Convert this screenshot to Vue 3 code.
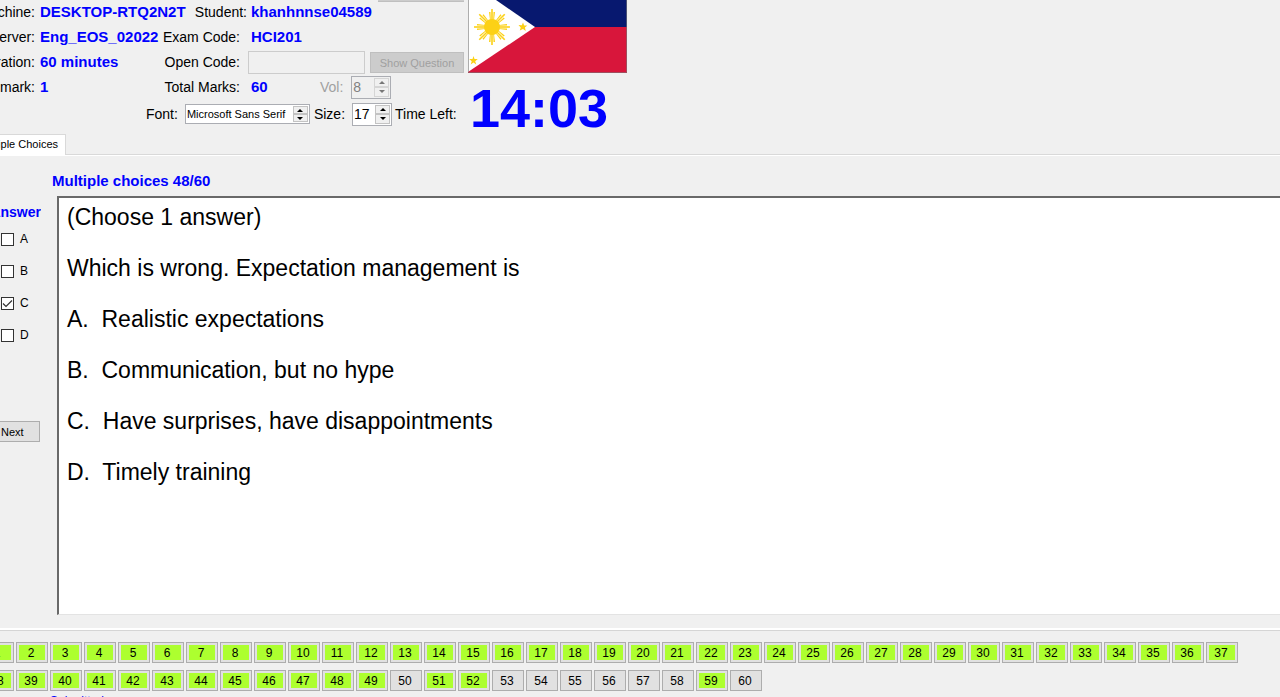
<script setup>
import { ref } from 'vue'

const answers = ref([
  { id: 'A', checked: false },
  { id: 'B', checked: false },
  { id: 'C', checked: true },
  { id: 'D', checked: false }
])
const lines = [
  '(Choose 1 answer)',
  'Which is wrong. Expectation management is',
  'A.  Realistic expectations',
  'B.  Communication, but no hype',
  'C.  Have surprises, have disappointments',
  'D.  Timely training'
]
const open = new Set([50, 53, 54, 55, 56, 57, 58, 60])
const rows = [
  Array.from({ length: 37 }, (_, i) => i + 1),
  Array.from({ length: 23 }, (_, i) => i + 38)
]
const rays = [0, 45, 90, 135, 180, 225, 270, 315]
</script>

<template>
  <main class="exam">
    <header class="top">
      <div class="info">
        <div class="row">
          <span class="lab edge">Machine:</span><b class="val">DESKTOP-RTQ2N2T</b>
          <span class="lab student">Student:</span><b class="val name">khanhnnse04589</b>
          <span class="sliver"></span>
        </div>
        <div class="row">
          <span class="lab edge">Server:</span><b class="val clip">Eng_EOS_02022</b>
          <span class="lab mid">Exam Code:</span><b class="val second">HCI201</b>
        </div>
        <div class="row">
          <span class="lab edge">Duration:</span><b class="val clip">60 minutes</b>
          <label class="lab mid" for="code">Open Code:</label>
          <input id="code" class="code" type="text" disabled>
          <button class="show" type="button" disabled>Show Question</button>
        </div>
        <div class="row">
          <span class="lab edge">Q mark:</span><b class="val clip">1</b>
          <span class="lab mid">Total Marks:</span><b class="val second marks">60</b>
          <label class="lab off vol" for="vol">Vol:</label>
          <span class="spin small off">
            <input id="vol" type="text" value="8" disabled>
            <span class="arrows"><button type="button" disabled aria-label="Volume up"><i class="up"></i></button><button type="button" disabled aria-label="Volume down"><i class="down"></i></button></span>
          </span>
        </div>
        <div class="row fonts">
          <label class="lab" for="font">Font:</label>
          <span class="spin wide">
            <input id="font" type="text" value="Microsoft Sans Serif">
            <span class="arrows"><button type="button" aria-label="Next font"><i class="up"></i></button><button type="button" aria-label="Previous font"><i class="down"></i></button></span>
          </span>
          <label class="lab" for="size">Size:</label>
          <span class="spin small">
            <input id="size" type="text" value="17">
            <span class="arrows"><button type="button" aria-label="Larger"><i class="up"></i></button><button type="button" aria-label="Smaller"><i class="down"></i></button></span>
          </span>
          <span class="lab">Time Left:</span>
        </div>
      </div>
      <div class="side">
        <svg class="flag" viewBox="0 0 159 73" width="159" height="73" aria-label="Flag of the Philippines">
          <rect width="159" height="27" fill="#07186f" />
          <rect y="27" width="159" height="46" fill="#d8163b" />
          <path d="M0 0H28L67 27L0 72Z" fill="#fff" />
          <g fill="#fcd116">
            <circle cx="24" cy="27" r="8" />
            <g v-for="r in rays" :key="r" :transform="`translate(24 27) rotate(${r})`">
              <path d="M-.8 -7V-18H.8V-7Z" />
              <path d="M-2 -7L-3 -15H-1.500L-1.200 -7ZM2 -7L3 -15H1.500L1.200 -7Z" />
            </g>
            <path d="M55 22.500L56.200 25.500L59.300 25.500L56.900 27.600L57.800 31L55 29L51.800 30.500L52.700 27.500L50.500 25L53.800 25.200Z" />
            <path d="M5.500 56L6.500 59L9.800 59L7.200 61.200L8.200 64.500L5.500 62.500L2.700 64.500L3.700 61.200L1.200 59L4.500 59Z" />
          </g>
          <path d="M.5 0V72.500H158.500V0" fill="none" stroke="#777" stroke-opacity=".6" />
        </svg>
        <strong class="time">14:03</strong>
      </div>
    </header>

    <nav class="tabs"><button class="tab" type="button"><span>Multiple Choices</span></button></nav>

    <section class="body">
      <h1 class="title">Multiple choices 48/60</h1>
      <div class="panel">
        <aside class="answers">
          <b class="head"><span>Answer</span></b>
          <label v-for="a in answers" :key="a.id" class="choice">
            <input v-model="a.checked" type="checkbox">
            <svg class="box" viewBox="0 0 13 13" width="13" height="13">
              <rect x=".5" y=".5" width="12" height="12" fill="#fff" stroke="#333" />
              <path v-if="a.checked" d="M2 6.500L5 9.500L11 3.500" fill="none" stroke="#333" stroke-width="1.200" />
            </svg>
            {{ a.id }}
          </label>
          <button class="next" type="button">Next</button>
        </aside>
        <article class="question">
          <p v-for="l in lines" :key="l">{{ l }}</p>
        </article>
      </div>
    </section>

    <footer class="numbers">
      <div v-for="(row, i) in rows" :key="i" class="numrow">
        <button v-for="n in row" :key="n" type="button" class="num" :class="{ done: !open.has(n) }"><span>{{ n }}</span></button>
      </div>
      <p class="status">Submitted</p>
    </footer>
  </main>
</template>

<style>
html, body { margin: 0; background: #f0f0f0; overflow: hidden; }
</style>

<style scoped>
* { box-sizing: border-box; }
.exam { font: 14px/20px "Liberation Sans", Arial, sans-serif; color: #000; background: #f0f0f0; height: 100vh; overflow: hidden; }
button, input { font: inherit; margin: 0; padding: 0; border-radius: 0; }
.top { display: flex; height: 134px; }
.info { width: 468px; flex: none; }
.row { display: flex; align-items: center; height: 25px; padding-bottom: 1px; white-space: pre; }
.lab { flex: none; }
.edge { width: 35px; display: flex; justify-content: flex-end; overflow: hidden; margin-right: 5px; }
.val { color: #00f; font-size: 15px; flex: none; }
.clip { width: 122px; overflow: hidden; }
.mid { width: 78px; display: flex; justify-content: flex-end; margin-right: 8px; }
.second { margin-left: 3px; }
.student { margin: 0 4px 0 auto; }
.name { width: 127px; }
.sliver { align-self: flex-start; width: 86px; height: 2px; margin-right: 4px; background: #ccc; border-bottom: 1px solid #bfbfbf; }
.code { width: 117px; height: 23px; background: #f0f0f0; border: 1px solid #ccc; }
.show { width: 94px; height: 21px; margin-left: 5px; background: #ccc; border: 1px solid #bfbfbf; color: #a0a0a0; font-size: 11px; }
.marks { width: 69px; }
.off { color: #a0a0a0; }
.vol { margin-right: 8px; }
.spin { display: flex; border: 1px solid #abadb3; background: #fff; padding: 1px; flex: none; }
.spin input { border: 0; background: none; flex: 1; min-width: 0; color: inherit; outline: 0; }
.small { width: 40px; height: 23px; }
.small input { padding-bottom: 1px; }
.small.off { background: #f0f0f0; color: #808080; }
.wide { width: 125px; height: 20px; font-size: 11px; }
.arrows { width: 15px; display: flex; flex-direction: column; flex: none; }
.arrows button { flex: 1; min-height: 0; display: flex; align-items: center; justify-content: center; background: #f0f0f0; border: 1px solid #c3c3c3; color: #000; }
.off .arrows button { color: #777; border-color: #d5d5d5; }
.up, .down { border: 3px solid transparent; }
.up { border-top: 0; border-bottom-color: currentColor; }
.down { border-bottom: 0; border-top-color: currentColor; }
.fonts { height: 29px; padding-left: 146px; }
.fonts .lab { margin-right: 7px; }
.fonts .spin + .lab { margin-left: 4px; }
.fonts .small + .lab { margin-left: 3px; }
.side { display: flex; flex-direction: column; align-items: flex-start; }
.flag { display: block; flex: none; }
.time { color: #00f; font-size: 54px; line-height: 60px; padding: 5px 0 0 2px; }
.tabs { height: 21px; border-bottom: 1px solid #d9d9d9; }
.tab { width: 66px; height: 21px; background: #fff; border: 1px solid #d9d9d9; border-width: 1px 1px 0 0; font-size: 11px; display: flex; justify-content: flex-end; align-items: center; overflow: hidden; padding: 0 7px 2px 0; white-space: nowrap; }
.body { border-top: 1px solid #fff; border-bottom: 2px solid #fff; padding: 15px 0 13px; }
.title { margin: 0 0 5px 52px; font-size: 15px; line-height: 20px; color: #00f; }
.panel { display: flex; height: 419px; }
.answers { width: 57px; flex: none; }
.head { display: flex; justify-content: flex-end; width: 41px; height: 32px; line-height: 32px; overflow: hidden; color: #00f; margin-bottom: -5px; }
.choice { display: flex; align-items: center; height: 32px; padding-left: 1px; gap: 6px; font-size: 12px; position: relative; }
.choice input { position: absolute; opacity: 0; width: 13px; height: 13px; }
.next { display: block; width: 40px; height: 21px; margin-top: 70px; background: #e1e1e1; border: 1px solid #adadad; border-left: 0; font-size: 11px; text-align: left; padding-left: 1px; }
.question { flex: 1; background: #fff; border: 2px solid #696969; border-width: 2px 0 1px 2px; border-bottom-color: #e3e3e3; padding: 6px 0 0 8px; font-size: 23px; line-height: 26px; white-space: pre; }
.question p { margin: 0 0 25px; }
.numbers { border-top: 1px solid #d5d5d5; padding-top: 11px; }
.numrow { display: flex; gap: 2px; margin: 0 0 7px -18px; }
.num { width: 32px; height: 21px; flex: none; border: 1px solid #adadad; background: #e1e1e1; font-size: 12px; padding: 2px; color: #000; }
.num span { display: block; height: 15px; line-height: 17px; padding-right: 2px; }
.done span { background: #adff2f; }
.status { margin: -5px 0 0 50px; font-size: 12px; line-height: 16px; color: #00f; }
</style>
